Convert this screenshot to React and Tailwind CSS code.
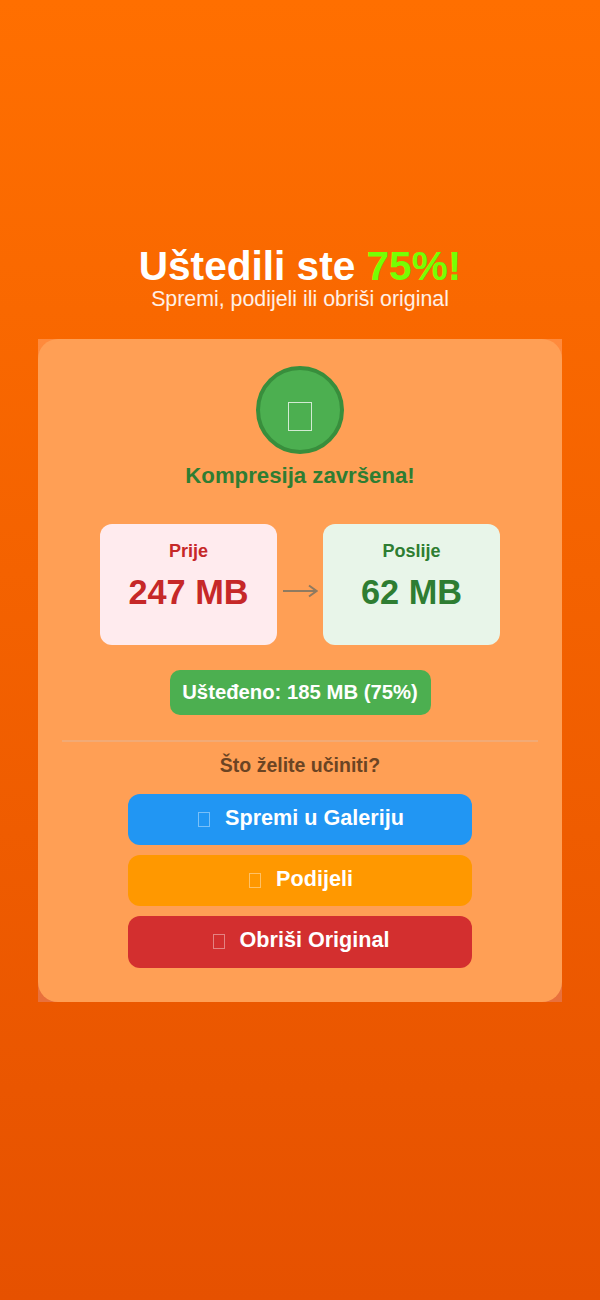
export default function App() {
  const buttons = [
    { label: "Spremi u Galeriju", bg: "bg-[#2196f3]", h: "h-[51px]" },
    { label: "Podijeli", bg: "bg-[#ff9800]", h: "h-[51px]" },
    { label: "Obriši Original", bg: "bg-[#d32f2f]", h: "h-[52px]" },
  ];
  return (
    <div className="w-[600px] h-[1300px] bg-gradient-to-b from-[#ff6f00] to-[#e65100] pt-[243px] px-[38px] font-['Liberation_Sans',Arial,sans-serif] overflow-hidden">
      <div className="text-center">
        <h1 className="text-[40.6px] leading-[46px] font-bold text-white">
          Uštedili ste <span className="text-[#76ff03]">75%!</span>
        </h1>
        <p className="text-[21.35px] leading-[21px] text-white/90">Spremi, podijeli ili obriši original</p>
      </div>
      <div className="mt-[29px] bg-gradient-to-b from-[#ff8a3c] to-[#e8703c]">
        <div className="h-[663px] bg-[#ff9f55] rounded-[20px] px-[24px] pt-[27px] flex flex-col items-center">
          <div className="w-[88px] h-[88px] rounded-full bg-[#4caf50] border-4 border-[#388e3c] flex items-center justify-center">
            <span className="block w-[24px] h-[29px] border border-white/75 mt-[12px]" />
          </div>
          <h2 className="mt-[9px] text-[22.2px] leading-[25px] font-bold text-[#2e7d32]">Kompresija završena!</h2>
          <div className="mt-[36px] flex items-center gap-[5px]">
            <div className="w-[177px] h-[121px] rounded-[12px] bg-[#ffebee] pt-[17px] text-center text-[#c62828]">
              <div className="text-[18px] leading-[21px] font-bold">Prije</div>
              <div className="mt-[11px] text-[34.3px] leading-[39px] font-bold">247 MB</div>
            </div>
            <div className="w-[36px] flex justify-center mt-[12px]">
              <svg width="36" height="16" viewBox="0 0 36 16" fill="none" stroke="#8f7a60" strokeWidth="2">
                <path d="M1 8H34" />
                <path d="M27 2.5L34.5 8L27 13.5" />
              </svg>
            </div>
            <div className="w-[177px] h-[121px] rounded-[12px] bg-[#e8f5e9] pt-[17px] text-center text-[#2e7d32]">
              <div className="text-[18px] leading-[21px] font-bold">Poslije</div>
              <div className="mt-[11px] text-[34.3px] leading-[39px] font-bold">62 MB</div>
            </div>
          </div>
          <div className="mt-[25px] h-[45px] w-[261px] rounded-[10px] bg-[#4caf50] flex items-center justify-center text-[20.3px] font-bold text-white">
            Ušteđeno: 185 MB (75%)
          </div>
          <div className="mt-[25px] w-[476px] h-[2px] bg-[#f2aa75]" />
          <h3 className="mt-[12px] text-[19.5px] leading-[23px] font-bold text-[#6b4423]">Što želite učiniti?</h3>
          <div className="mt-[17px] w-[344px] flex flex-col gap-[10px]">
            {buttons.map((b) => (
              <button key={b.label} className={`${b.bg} ${b.h} rounded-[12px] flex items-center justify-center gap-[15px] pb-[3px] pl-[2px] text-[21.6px] font-bold text-white`}>
                <span className="block w-[12px] h-[15px] border border-white/40 mt-[2px]" />
                <span>{b.label}</span>
              </button>
            ))}
          </div>
        </div>
      </div>
    </div>
  );
}
